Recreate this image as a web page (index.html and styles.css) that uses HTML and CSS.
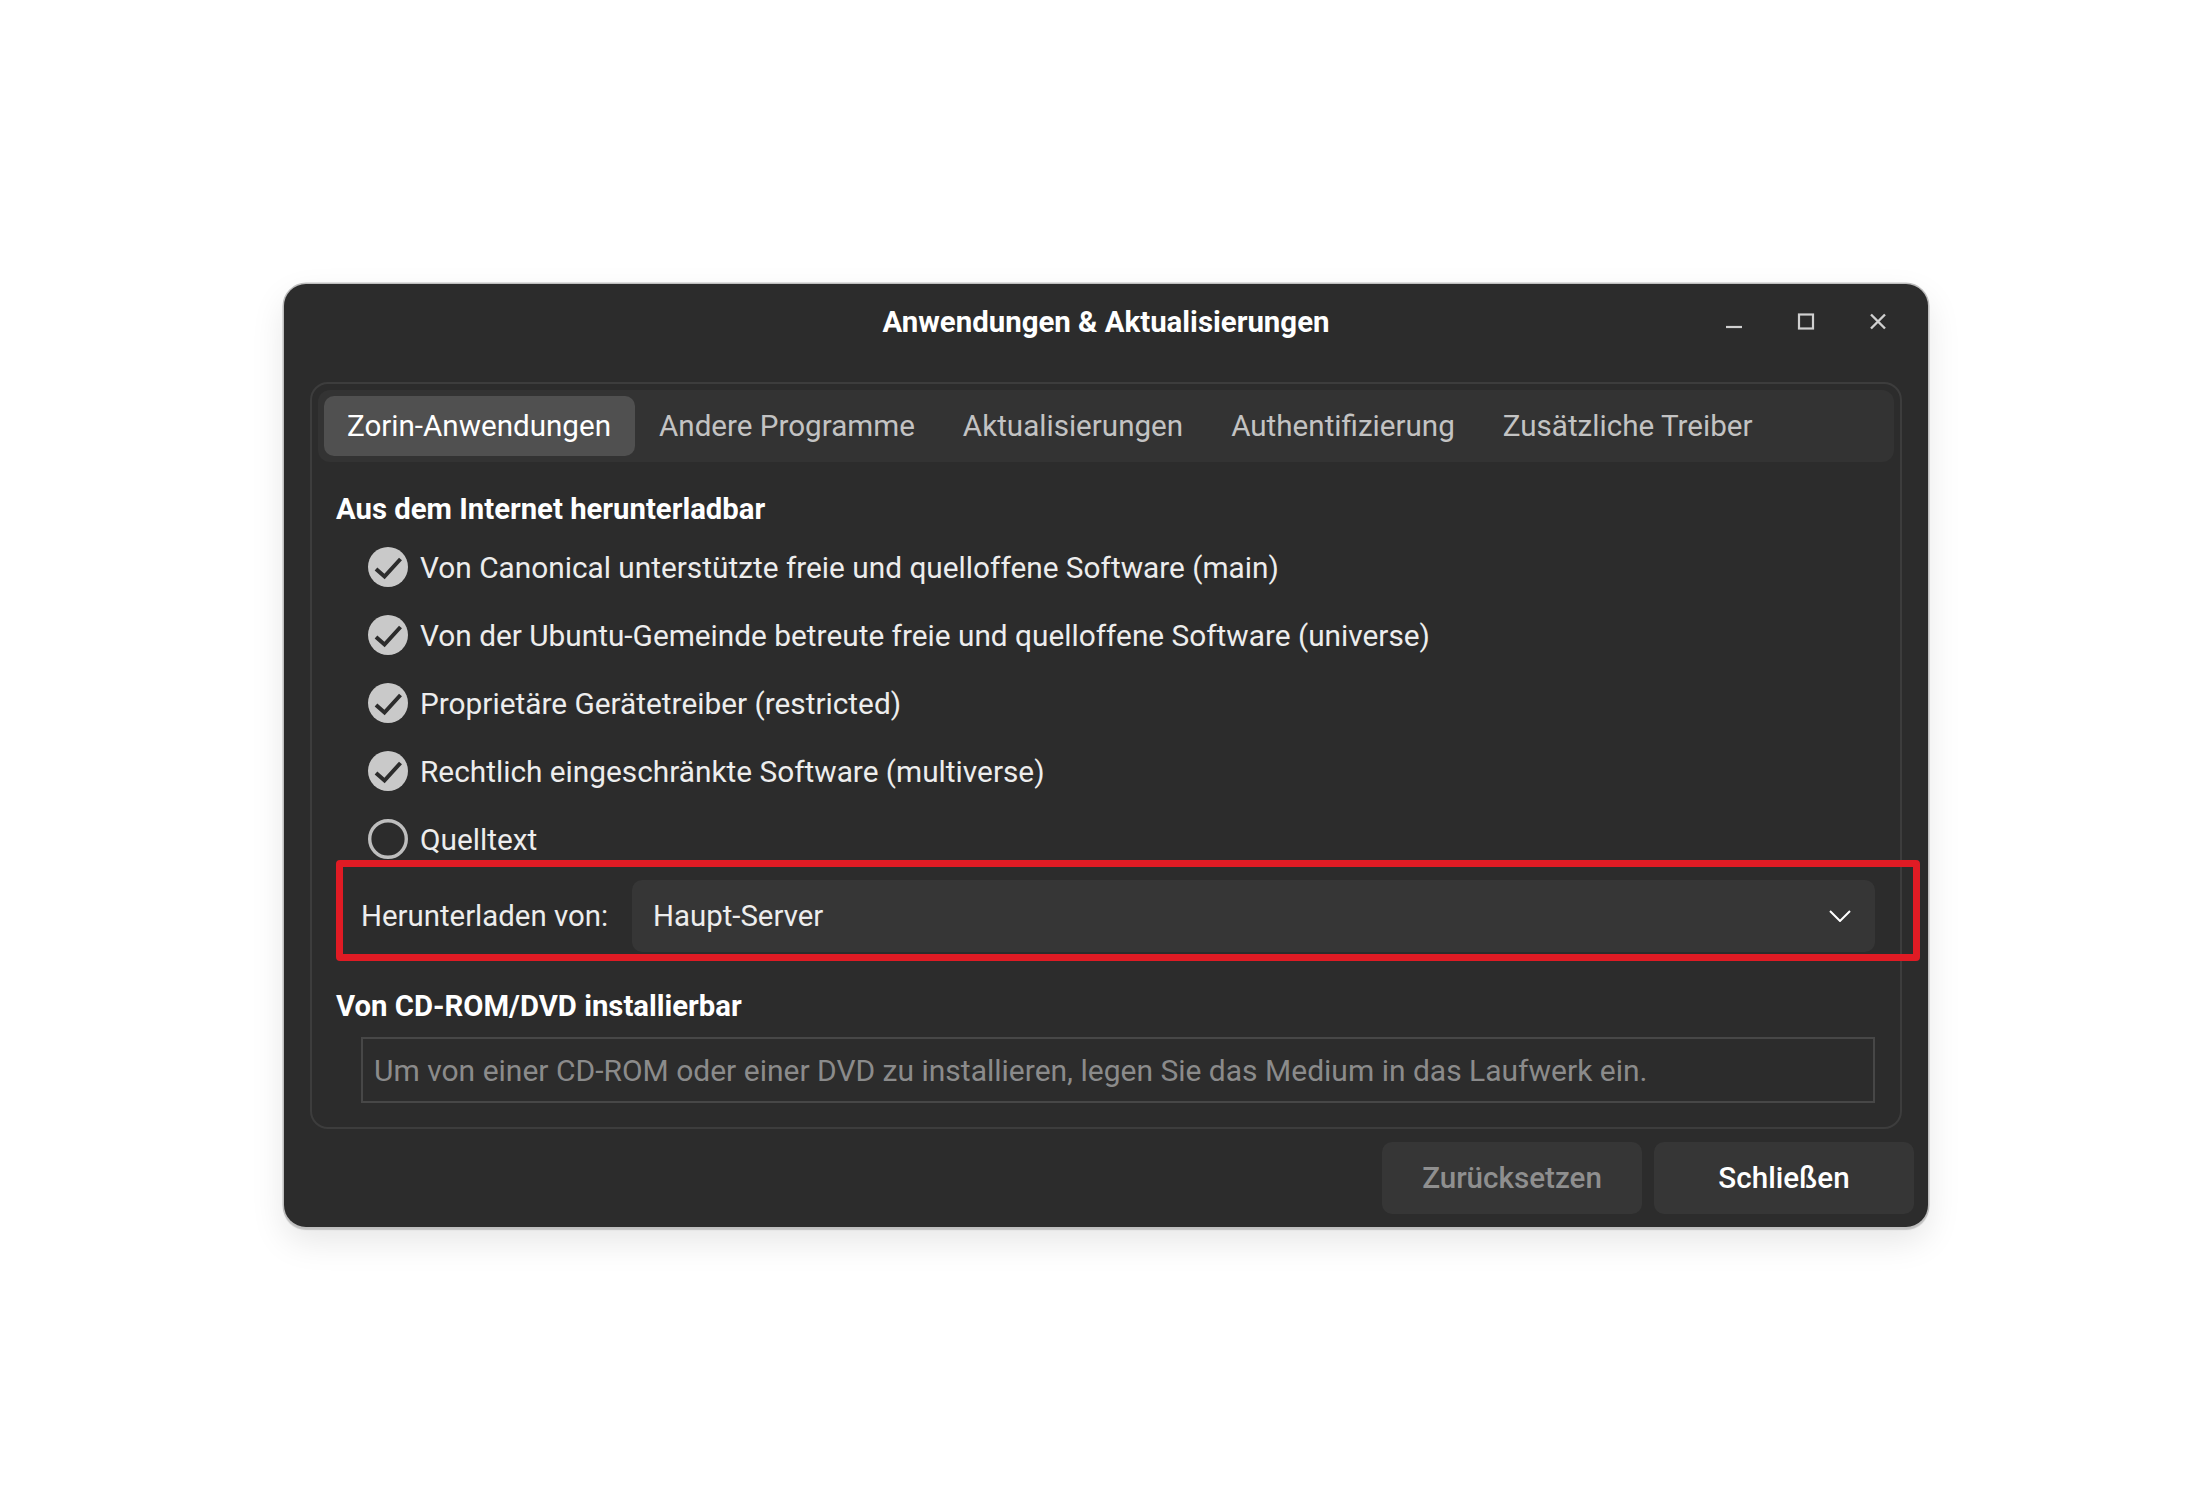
FILE: index.html
```html
<!DOCTYPE html>
<html lang="de">
<head>
<meta charset="utf-8">
<title>Anwendungen &amp; Aktualisierungen</title>
<link rel="stylesheet" href="styles.css">
</head>
<body>
<div class="window">
  <header class="titlebar">
    <div></div>
    <div class="title">Anwendungen &amp; Aktualisierungen</div>
    <div class="controls">
      <span class="ctl"><svg width="18" height="18" viewBox="0 0 18 18"><line x1="1" y1="14" x2="17" y2="14" stroke="#d0d0d0" stroke-width="2.2"/></svg></span>
      <span class="ctl"><svg width="18" height="18" viewBox="0 0 18 18"><rect x="2" y="1.5" width="14" height="14" fill="none" stroke="#d0d0d0" stroke-width="2.2"/></svg></span>
      <span class="ctl"><svg width="18" height="18" viewBox="0 0 18 18"><path d="M2 1.5 L16 15.5 M16 1.5 L2 15.5" stroke="#d0d0d0" stroke-width="2.4" fill="none"/></svg></span>
    </div>
  </header>

  <section class="frame">
    <nav class="tabs">
      <div class="tab active">Zorin-Anwendungen</div>
      <div class="tab">Andere Programme</div>
      <div class="tab">Aktualisierungen</div>
      <div class="tab">Authentifizierung</div>
      <div class="tab">Zusätzliche Treiber</div>
    </nav>

    <div class="page">
      <h2 class="heading first">Aus dem Internet herunterladbar</h2>
      <div class="row">
        <svg class="check" viewBox="0 0 40 40"><circle cx="20" cy="20" r="20" fill="#c9c9c9"/><path d="M8 22 L16.5 29.5 L32.5 12" fill="none" stroke="#2c2c2c" stroke-width="4"/></svg>
        <span>Von Canonical unterstützte freie und quelloffene Software (main)</span>
      </div>
      <div class="row">
        <svg class="check" viewBox="0 0 40 40"><circle cx="20" cy="20" r="20" fill="#c9c9c9"/><path d="M8 22 L16.5 29.5 L32.5 12" fill="none" stroke="#2c2c2c" stroke-width="4"/></svg>
        <span>Von der Ubuntu-Gemeinde betreute freie und quelloffene Software (universe)</span>
      </div>
      <div class="row">
        <svg class="check" viewBox="0 0 40 40"><circle cx="20" cy="20" r="20" fill="#c9c9c9"/><path d="M8 22 L16.5 29.5 L32.5 12" fill="none" stroke="#2c2c2c" stroke-width="4"/></svg>
        <span>Proprietäre Gerätetreiber (restricted)</span>
      </div>
      <div class="row">
        <svg class="check" viewBox="0 0 40 40"><circle cx="20" cy="20" r="20" fill="#c9c9c9"/><path d="M8 22 L16.5 29.5 L32.5 12" fill="none" stroke="#2c2c2c" stroke-width="4"/></svg>
        <span>Rechtlich eingeschränkte Software (multiverse)</span>
      </div>
      <div class="row">
        <svg class="check" viewBox="0 0 40 40"><circle cx="20" cy="20" r="18.3" fill="none" stroke="#bebebe" stroke-width="3.4"/></svg>
        <span>Quelltext</span>
      </div>

      <div class="server-row">
        <label class="server-label">Herunterladen von:</label>
        <div class="combo">
          <span>Haupt-Server</span>
          <svg width="22" height="12" viewBox="0 0 22 12"><path d="M1 1 L11 11 L21 1" fill="none" stroke="#ffffff" stroke-width="2"/></svg>
        </div>
        <div class="highlight"></div>
      </div>

      <h2 class="heading second">Von CD-ROM/DVD installierbar</h2>
      <div class="entry">Um von einer CD-ROM oder einer DVD zu installieren, legen Sie das Medium in das Laufwerk ein.</div>
    </div>
  </section>

  <footer class="footer">
    <button class="btn disabled">Zurücksetzen</button>
    <button class="btn">Schließen</button>
  </footer>
</div>
</body>
</html>
```

FILE: styles.css
```css
* { box-sizing: border-box; }

html, body {
  margin: 0;
  background: #ffffff;
}

body {
  width: 2212px;
  height: 1512px;
  padding: 284px 0 0 284px;
  font-family: Roboto, "Noto Sans", "Liberation Sans", sans-serif;
  font-size: 29.8px;
  color: #ededed;
  overflow: hidden;
}

.window {
  width: 1644px;
  height: 943px;
  background: #2c2c2c;
  border-radius: 22px;
  padding: 0 26px 13px;
  display: flex;
  flex-direction: column;
  box-shadow: 0 0 0 1.5px #bfbfbf, 0 2px 1px 1px #c4c4c4, 0 14px 34px rgba(0, 0, 0, 0.10);
}

.titlebar {
  height: 76px;
  display: grid;
  grid-template-columns: 1fr auto 1fr;
  align-items: center;
}

.title {
  font-weight: 700;
  font-size: 29.4px;
  color: #ffffff;
}

.controls {
  display: flex;
  justify-content: flex-end;
  gap: 28px;
  margin-right: 2px;
}

.ctl {
  width: 44px;
  height: 44px;
  display: flex;
  align-items: center;
  justify-content: center;
}

.frame {
  margin-top: 22px;
  height: 747px;
  border: 2px solid #3d3d3d;
  border-radius: 18px;
  padding: 6px 6px 24px;
}

.tabs {
  height: 72px;
  background: #333333;
  border-radius: 12px;
  padding: 6px;
  display: flex;
  font-size: 29.6px;
}

.tab {
  height: 60px;
  padding: 0 24px;
  display: flex;
  align-items: center;
  color: #c3c3c3;
  border-radius: 10px;
}

.tab.active {
  background: #505050;
  color: #ffffff;
  padding: 0 24px 0 23px;
}

.page {
  padding: 0 19px 0 18px;
}

.heading {
  margin: 0;
  height: 40px;
  line-height: 40px;
  font-size: 29.3px;
  font-weight: 700;
  color: #ffffff;
}

.heading.first { margin-top: 27px; margin-bottom: 4px; }
.heading.second { margin-top: 34px; }

.row {
  height: 68px;
  display: flex;
  align-items: center;
  padding-left: 32px;
  gap: 12px;
}

.check {
  width: 40px;
  height: 40px;
  flex: none;
}

.server-row {
  position: relative;
  margin-top: 7px;
  height: 72px;
  display: flex;
  align-items: center;
  padding-left: 25px;
  font-size: 29.4px;
}

.server-label {
  width: 271px;
  flex: none;
}

.combo {
  flex: 1;
  height: 72px;
  background: #363636;
  border-radius: 10px;
  display: flex;
  align-items: center;
  justify-content: space-between;
  padding: 0 24px 0 21px;
}

.highlight {
  position: absolute;
  top: -20px;
  left: 0;
  right: -45px;
  bottom: -9px;
  border: 7px solid #e01b24;
  border-radius: 4px;
  pointer-events: none;
}

.entry {
  margin: 11px 0 0 25px;
  height: 66px;
  border: 2px solid #474747;
  padding-left: 11px;
  display: flex;
  align-items: center;
  color: #8b8b8b;
  font-size: 30px;
}

.footer {
  margin-top: 13px;
  margin-right: -12px;
  display: flex;
  justify-content: flex-end;
  gap: 12px;
}

.btn {
  width: 260px;
  height: 72px;
  border: none;
  border-radius: 10px;
  background: #363636;
  color: #ffffff;
  font-family: Roboto, "Noto Sans", "Liberation Sans", sans-serif;
  font-size: 29.6px;
  font-weight: 500;
}

.btn.disabled {
  color: #8f8f8f;
}
```
